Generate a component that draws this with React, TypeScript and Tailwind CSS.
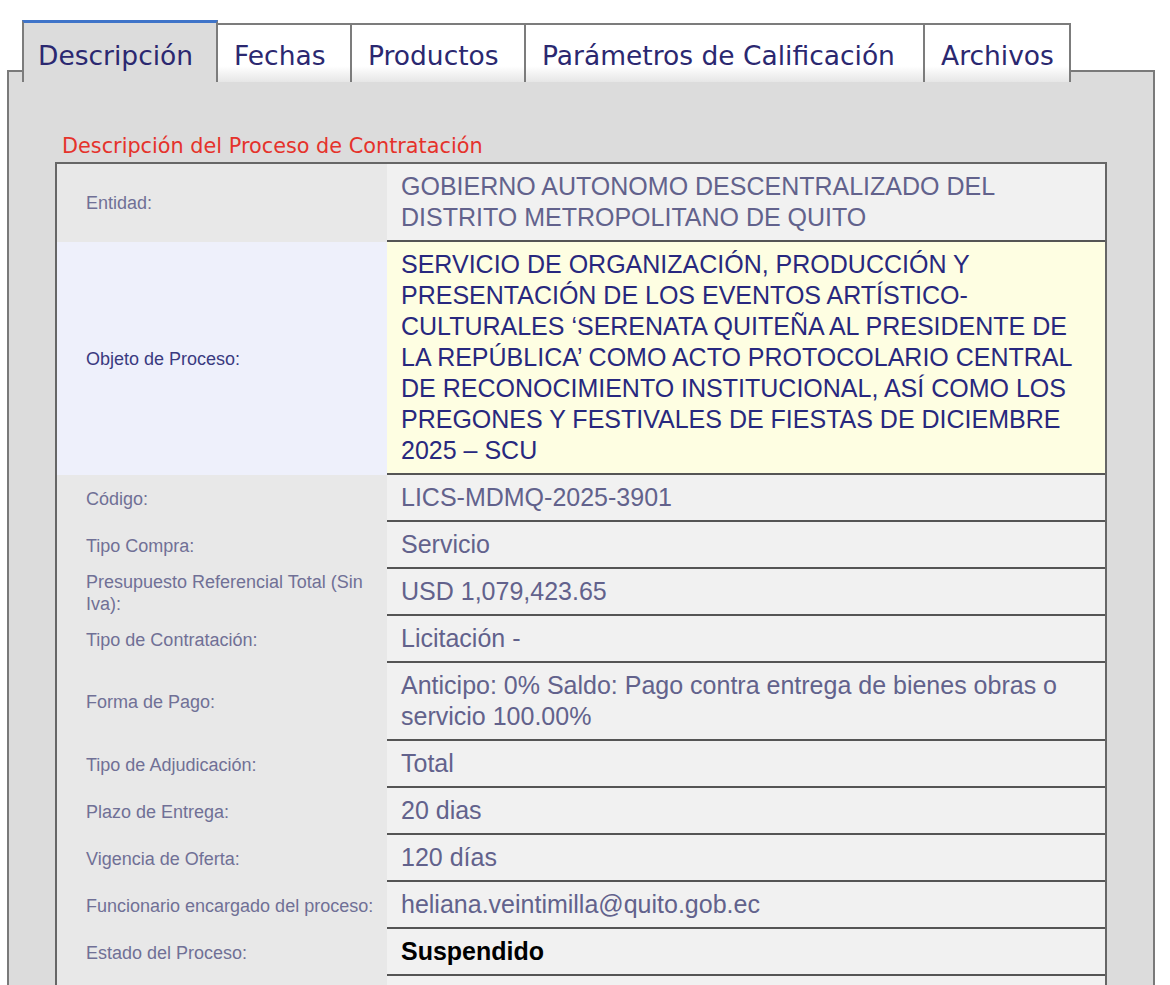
const tabs = [
  { name: 'Descripción', width: 'w-[196px]' },
  { name: 'Fechas', width: 'w-[134px]' },
  { name: 'Productos', width: 'w-[174px]' },
  { name: 'Parámetros de Calificación', width: 'w-[399px]' },
  { name: 'Archivos', width: 'w-[146px]' },
];

type Row = {
  label: string;
  value: string;
  highlight?: boolean;
  strong?: boolean;
};

const rows: Row[] = [
  { label: 'Entidad:', value: 'GOBIERNO AUTONOMO DESCENTRALIZADO DEL DISTRITO METROPOLITANO DE QUITO' },
  {
    label: 'Objeto de Proceso:',
    value:
      'SERVICIO DE ORGANIZACIÓN, PRODUCCIÓN Y PRESENTACIÓN DE LOS EVENTOS ARTÍSTICO-CULTURALES ‘SERENATA QUITEÑA AL PRESIDENTE DE LA REPÚBLICA’ COMO ACTO PROTOCOLARIO CENTRAL DE RECONOCIMIENTO INSTITUCIONAL, ASÍ COMO LOS PREGONES Y FESTIVALES DE FIESTAS DE DICIEMBRE 2025 – SCU',
    highlight: true,
  },
  { label: 'Código:', value: 'LICS-MDMQ-2025-3901' },
  { label: 'Tipo Compra:', value: 'Servicio' },
  { label: 'Presupuesto Referencial Total (Sin Iva):', value: 'USD 1,079,423.65' },
  { label: 'Tipo de Contratación:', value: 'Licitación -' },
  { label: 'Forma de Pago:', value: 'Anticipo: 0% Saldo: Pago contra entrega de bienes obras o servicio 100.00%' },
  { label: 'Tipo de Adjudicación:', value: 'Total' },
  { label: 'Plazo de Entrega:', value: '20 dias' },
  { label: 'Vigencia de Oferta:', value: '120 días' },
  { label: 'Funcionario encargado del proceso:', value: 'heliana.veintimilla@quito.gob.ec' },
  { label: 'Estado del Proceso:', value: 'Suspendido', strong: true },
];

export default function App() {
  return (
    <div className="min-h-screen bg-white pt-[20px] font-['Liberation_Sans',Arial,sans-serif]">
      {/* Tabs */}
      <div className="relative z-10 ml-[22px] flex items-end font-['DejaVu_Sans',Verdana,sans-serif] text-[26.5px] leading-[30px] text-[#2b2870]">
        {tabs.map((tab, i) =>
          i === 0 ? (
            <div
              key={tab.name}
              className={`${tab.width} h-[62px] border-x-2 border-t-[3px] border-x-[#7c7c7c] border-t-[#3f74c9] bg-[#dcdcdc] pl-[14px] pt-[18px] whitespace-nowrap`}
            >
              {tab.name}
            </div>
          ) : (
            <div
              key={tab.name}
              className={`${tab.width} h-[59px] border-r-2 border-t-2 border-[#7c7c7c] bg-linear-to-b from-white from-[72%] to-[#e6e6e6] pl-[16px] pt-[16px] whitespace-nowrap`}
            >
              {tab.name}
            </div>
          )
        )}
      </div>

      {/* Panel */}
      <div className="-mt-[12px] ml-[7px] w-[1148px] border-x-2 border-t-2 border-[#7a7a7a] bg-[#dcdcdc] px-[46px] pt-[62px] pb-10">
        <h2 className="pl-[7px] font-['DejaVu_Sans',Verdana,sans-serif] text-[20.8px] leading-[24px] text-[#e5322b]">
          Descripción del Proceso de Contratación
        </h2>

        <div className="mt-[4px] grid grid-cols-[330px_1fr] border-x-2 border-t-2 border-[#666]">
          {rows.map((row) => (
            <div key={row.label} className="contents">
              <div
                className={
                  row.highlight
                    ? 'flex items-center bg-[#eef0fb] pl-[29px] pr-[8px] text-[18px] leading-[22px] text-[#3a3a80]'
                    : 'flex items-center bg-[#e8e8e8] pl-[29px] pr-[8px] text-[18px] leading-[22px] text-[#707096]'
                }
              >
                {row.label}
              </div>
              <div
                className={
                  row.highlight
                    ? 'border-b-2 border-[#555] bg-[#fefee2] px-[14px] py-[7px] text-[25px] leading-[31px] text-[#28287e]'
                    : row.strong
                      ? 'border-b-2 border-[#555] bg-[#f1f1f1] px-[14px] py-[7px] text-[25px] font-bold leading-[31px] text-black'
                      : 'border-b-2 border-[#555] bg-[#f1f1f1] px-[14px] py-[7px] text-[25px] leading-[31px] text-[#62628c]'
                }
              >
                {row.value}
              </div>
            </div>
          ))}
          {/* next row, continues below the fold */}
          <div className="h-[47px] bg-[#e8e8e8]" />
          <div className="h-[47px] border-b-2 border-[#555] bg-[#f1f1f1]" />
        </div>
      </div>
    </div>
  );
}
